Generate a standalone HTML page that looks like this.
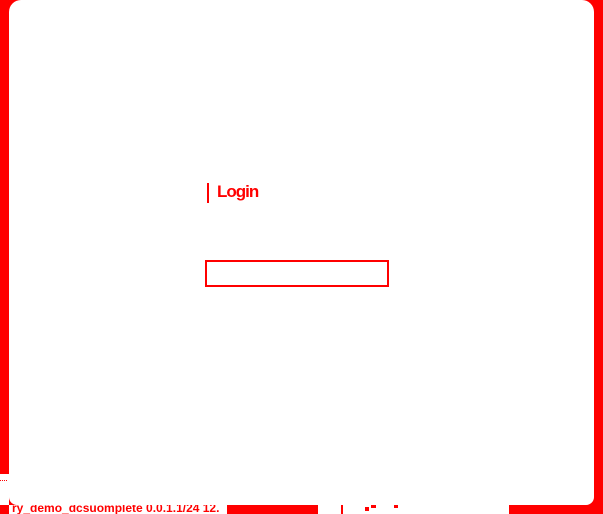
<!DOCTYPE html>
<html><head><meta charset="utf-8"><style>
html,body{margin:0;padding:0;}
body{width:603px;height:514px;position:relative;overflow:hidden;background:#f00;font-family:"Liberation Sans",sans-serif;}
.panel{position:absolute;left:9px;top:0;width:585px;height:505px;background:#fff;border-radius:12px 12px 8px 8px;}
.leftlow{position:absolute;left:0;top:474px;width:9px;height:31px;background:#fff;}
.dot{position:absolute;left:0;width:7px;border-top:1px dotted #f00;}
.bar{position:absolute;left:207px;top:183px;width:2px;height:20px;background:#f00;}
.title{position:absolute;left:217px;top:182px;font-size:17px;font-weight:bold;color:#f00;letter-spacing:-1px;}
.input{position:absolute;left:205px;top:260px;width:180px;height:23px;border:2px solid #f00;background:#fff;}
.foot{position:absolute;left:9px;top:505px;width:500px;height:9px;background:#fff;overflow:hidden;}
.foot span{position:absolute;left:3px;top:-4px;font-size:12px;font-weight:bold;color:#f00;white-space:nowrap;}
.blk{position:absolute;background:#f00;}
</style></head><body>
<div class="panel"></div>
<div class="leftlow"></div>
<div class="dot" style="top:480px"></div>
<div class="dot" style="top:507px"></div>
<div class="bar"></div>
<div class="title">Login</div>
<div class="input"></div>
<div class="foot"><span>ry_demo_dcsuomplete 0.0.1.1/24 12.</span>
<div class="blk" style="left:218px;top:0;width:91px;height:9px"></div>
<div class="blk" style="left:332px;top:0;width:2px;height:9px"></div>
<div class="blk" style="left:356px;top:2px;width:4px;height:4px"></div>
<div class="blk" style="left:362px;top:0;width:5px;height:3px"></div>
<div class="blk" style="left:385px;top:0;width:4px;height:3px"></div>
</div>
</body></html>
